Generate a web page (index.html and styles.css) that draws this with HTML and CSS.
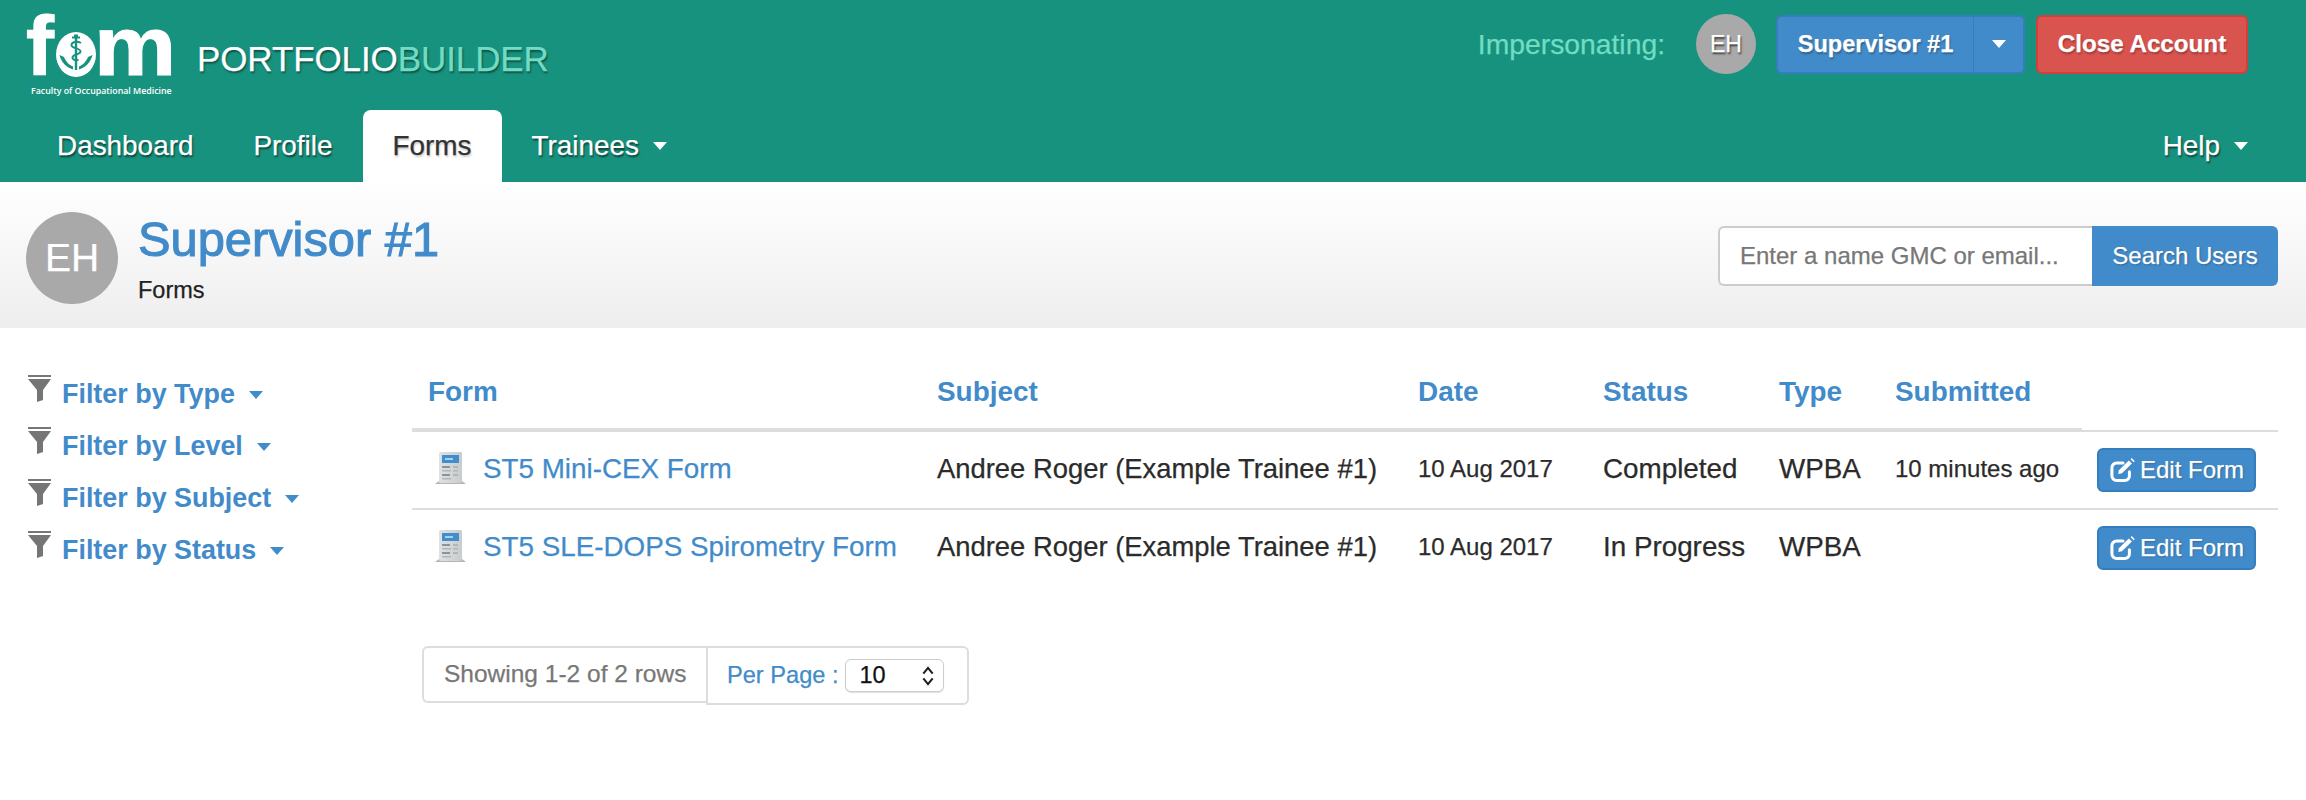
FILE: index.html
```html
<!DOCTYPE html>
<html lang="en">
<head>
<meta charset="utf-8">
<title>Portfolio Builder - Forms</title>
<link rel="stylesheet" href="styles.css">
</head>
<body>
<svg class="sprite" width="0" height="0" aria-hidden="true">
  <defs>
    <linearGradient id="docg" x1="0" y1="0" x2="1" y2="0"><stop offset="0" stop-color="#dfe1e2"/><stop offset="1" stop-color="#c9cccd"/></linearGradient>
    <symbol id="funnel" viewBox="0 0 23 27">
      <rect x="0" y="0" width="23" height="2" fill="#777"/>
      <path d="M0 4H23L15 15V25L9 27V15Z" fill="#757575"/>
    </symbol>
    <symbol id="doc" viewBox="0 0 31 32">
      <path d="M0 32L4 29H27L31 32Z" fill="#b5b5b5"/>
      <rect x="4" y="0" width="23" height="31" rx="1.5" fill="url(#docg)"/>
      <rect x="7" y="3" width="17" height="8" fill="#3f8fcf"/>
      <rect x="10" y="6" width="8" height="2" fill="#a7d2ee"/>
      <g fill="#8f9396">
        <rect x="7" y="14" width="8" height="2"/><rect x="18" y="14" width="5" height="2" fill="#b3b6b8"/>
        <rect x="7" y="18" width="9" height="1.5" fill="#b3b6b8"/><rect x="18" y="18" width="5" height="1.5" fill="#b3b6b8"/>
        <rect x="7" y="22" width="8" height="2"/><rect x="18" y="22" width="5" height="2" fill="#b3b6b8"/>
        <rect x="7" y="26" width="9" height="1.5" fill="#b3b6b8"/>
      </g>
    </symbol>
    <symbol id="edit" viewBox="0 0 24 24">
      <path d="M17.500 13.500V17a4 4 0 0 1-4 4H6.500a4 4 0 0 1-4-4V10a4 4 0 0 1 4-4H12" fill="none" stroke="#fff" stroke-width="2.600" stroke-linecap="round"/>
      <path d="M8.500 12.200L17 3.800l2.600 2.600L11.100 14.800 7.900 15.400Z" fill="#fff"/>
      <path d="M19.500 1.800l2.600 2.600-1 1L18.500 2.800Z" fill="#fff"/>
    </symbol>
  </defs>
</svg>

<header class="topbar">
  <div class="brand-row">
    <a class="logo" href="#">
      <span class="logo-mark">
        <span class="logo-letter logo-f">f</span>
        <svg class="logo-o" viewBox="0 0 40 45" aria-hidden="true">
          <ellipse cx="20" cy="22.500" rx="20" ry="22.500" fill="#fff"/>
          <path d="M3.500 23C5 30 10 35 17 37.500V34.500C13 33 9.500 29 8 25ZM36.500 23C35 30 30 35 23 37.500V34.500C27 33 30.500 29 32 25Z" fill="#17927e"/>
          <rect x="18.800" y="6" width="2.400" height="32" fill="#17927e"/>
          <path d="M16 5.500h8M18 3.500h4" stroke="#17927e" stroke-width="2"/>
          <path d="M25 11c-4-2.500-10-1-9.500 2.500.5 3 9 2.500 9 6s-8 2.500-8 6c0 2.500 4 3.500 6 2" fill="none" stroke="#17927e" stroke-width="1.900"/>
        </svg>
        <span class="logo-letter logo-m">m</span>
      </span>
      <span class="logo-tag">Faculty of Occupational Medicine</span>
    </a>
    <div class="product"><span class="product-a">PORTFOLIO</span><span class="product-b">BUILDER</span></div>
    <div class="session">
      <span class="imp-label">Impersonating:</span>
      <span class="avatar-sm">EH</span>
      <div class="split-btn">
        <button class="btn-main">Supervisor #1</button>
        <button class="btn-caret"><span class="caret caret-white"></span></button>
      </div>
      <button class="btn-close">Close Account</button>
    </div>
  </div>
  <nav class="tabs">
    <a class="tab" href="#">Dashboard</a>
    <a class="tab" href="#">Profile</a>
    <a class="tab tab-active" href="#">Forms</a>
    <a class="tab" href="#">Trainees<span class="caret caret-white"></span></a>
    <a class="tab tab-right" href="#">Help<span class="caret caret-white"></span></a>
  </nav>
</header>

<section class="subheader">
  <span class="avatar-lg">EH</span>
  <div class="who">
    <h1>Supervisor #1</h1>
    <p>Forms</p>
  </div>
  <form class="search">
    <input type="text" placeholder="Enter a name GMC or email...">
    <button type="button">Search Users</button>
  </form>
</section>

<main class="page">
  <aside class="filters">
    <a class="filter" href="#"><svg class="ic-funnel"><use href="#funnel"/></svg>Filter by Type<span class="caret caret-blue"></span></a>
    <a class="filter" href="#"><svg class="ic-funnel"><use href="#funnel"/></svg>Filter by Level<span class="caret caret-blue"></span></a>
    <a class="filter" href="#"><svg class="ic-funnel"><use href="#funnel"/></svg>Filter by Subject<span class="caret caret-blue"></span></a>
    <a class="filter" href="#"><svg class="ic-funnel"><use href="#funnel"/></svg>Filter by Status<span class="caret caret-blue"></span></a>
  </aside>
  <div class="content">
    <table class="forms">
      <colgroup>
        <col class="c-form"><col class="c-subject"><col class="c-date"><col class="c-status"><col class="c-type"><col class="c-sub"><col class="c-act">
      </colgroup>
      <thead>
        <tr><th>Form</th><th>Subject</th><th>Date</th><th>Status</th><th>Type</th><th>Submitted</th><th class="th-act"></th></tr>
      </thead>
      <tbody>
        <tr>
          <td><a class="form-link" href="#"><svg class="ic-doc"><use href="#doc"/></svg>ST5 Mini-CEX Form</a></td>
          <td class="subj">Andree Roger (Example Trainee #1)</td>
          <td class="small">10 Aug 2017</td>
          <td>Completed</td>
          <td>WPBA</td>
          <td class="small">10 minutes ago</td>
          <td class="act"><button class="btn-edit"><svg class="ic-edit"><use href="#edit"/></svg>Edit Form</button></td>
        </tr>
        <tr>
          <td><a class="form-link" href="#"><svg class="ic-doc"><use href="#doc"/></svg>ST5 SLE-DOPS Spirometry Form</a></td>
          <td class="subj">Andree Roger (Example Trainee #1)</td>
          <td class="small">10 Aug 2017</td>
          <td>In Progress</td>
          <td>WPBA</td>
          <td class="small"></td>
          <td class="act"><button class="btn-edit"><svg class="ic-edit"><use href="#edit"/></svg>Edit Form</button></td>
        </tr>
      </tbody>
    </table>
    <div class="pager">
      <span class="pager-info">Showing 1-2 of 2 rows</span>
      <div class="pager-size">
        <span class="pager-label">Per Page :</span>
        <span class="select">10
          <svg class="chev" viewBox="0 0 12 20" aria-hidden="true"><path d="M2 8L6 3l4 5M2 12l4 5 4-5" fill="none" stroke="#222" stroke-width="1.800"/></svg>
        </span>
      </div>
    </div>
  </div>
</main>
</body>
</html>
```

FILE: styles.css
```css
* { box-sizing: border-box; }
html, body { margin: 0; padding: 0; }
body {
  height: 800px;
  overflow: hidden;
  background: #fff;
  color: #2b2b2b;
  font-family: "Liberation Sans", Arial, sans-serif;
  font-size: 27.8px;
  -webkit-text-stroke: 0.25px;
}
a { text-decoration: none; }
button { font-family: inherit; cursor: pointer; }
.sprite { position: absolute; }

/* top bar */
.topbar { background: #17927e; height: 182px; display: flex; flex-direction: column; }
.brand-row { height: 110px; display: flex; align-items: flex-start; padding: 14px 58px 0 27px; }
.logo { width: 146px; height: 80px; display: flex; flex-direction: column; color: #fff; }
.logo-mark { display: flex; height: 70px; align-items: flex-end; }
.logo-letter { font-size: 84px; font-weight: 700; line-height: 80px; height: 78px; color: #fff; -webkit-text-stroke: 1px #fff; }
.logo-f { margin-left: -1px; }
.logo-m { transform: scaleX(1.1); transform-origin: left center; }
.logo-o { width: 40px; height: 45px; margin: 0 -2px 7px 2px; flex: none; }
.logo-tag { font: 600 8.800px/12px "Open Sans", "Liberation Sans", sans-serif; margin: 1px 0 0 4px; white-space: nowrap; -webkit-text-stroke: 0; }
.product { margin: 25px 0 0 24px; font-size: 35px; line-height: 40px; letter-spacing: -0.1px; text-shadow: 1px 2px 2px rgba(0,0,0,.45); }
.product-a { color: #fff; }
.product-b { color: #72dcc3; }
.session { margin-left: auto; display: flex; align-items: center; height: 60px; }
.imp-label { color: #72dcc3; font-size: 28.300px; margin-right: 31px; }
.avatar-sm {
  width: 60px; height: 60px; border-radius: 50%; background: #a9a9a9; color: #fff;
  display: flex; align-items: center; justify-content: center; font-size: 23px;
  text-shadow: 1px 2px 2px rgba(0,0,0,.7); margin-right: 20px;
}
.split-btn { display: flex; height: 59px; }
.btn-main, .btn-caret, .btn-close {
  height: 59px; color: #fff; font-size: 23.500px; font-weight: 700; text-shadow: 1px 2px 2px rgba(0,0,0,.3);
}
.btn-main {
  width: 198px; background: #428bca; border: 2px solid #357ebd; border-right: 1px solid #357ebd;
  border-radius: 6px 0 0 6px; padding: 0;
}
.btn-caret {
  width: 51px; background: #428bca; border: 2px solid #357ebd; border-left: 0;
  border-radius: 0 6px 6px 0; padding: 0; display: flex; align-items: center; justify-content: center;
}
.btn-caret .caret { margin: 0; }
.btn-close {
  width: 212px; margin-left: 11px; background: #d9534f; border: 2px solid #d43f3a; border-radius: 6px; padding: 0; font-size: 24.200px;
}
.caret { display: inline-block; width: 0; height: 0; border-left: 7px solid transparent; border-right: 7px solid transparent; margin-left: 14px; vertical-align: middle; -webkit-text-stroke: 0; }
.caret-white { border-top: 8px solid #fff; }
.caret-blue { border-top: 8px solid #428bca; }

.tabs { height: 72px; display: flex; padding: 0 58px 0 27px; }
.tab {
  height: 72px; display: flex; align-items: center; padding: 0 30px; color: #fff; font-size: 27.900px;
  text-shadow: 1px 2px 2px rgba(0,0,0,.6);
}
.tab-active { background: #fff; color: #333; border-radius: 8px 8px 0 0; text-shadow: 1px 2px 2px rgba(0,0,0,.2); }
.tab-right { margin-left: auto; padding: 0; }

/* sub header */
.subheader {
  height: 146px; display: flex; align-items: flex-start; padding: 30px 28px 0 26px;
  background: linear-gradient(#fff, #eee);
}
.avatar-lg {
  width: 92px; height: 92px; border-radius: 50%; background: #a9a9a9; color: #fff; flex: none;
  display: flex; align-items: center; justify-content: center; font-size: 39px;
}
.who { margin-left: 20px; }
.who h1 { margin: 0; font-size: 48.800px; line-height: 54px; font-weight: 400; color: #428bca; -webkit-text-stroke: 1.100px #428bca; }
.who p { margin: 10px 0 0; font-size: 23.500px; line-height: 28px; color: #222; }
.search { margin-left: auto; display: flex; margin-top: 14px; height: 60px; }
.search input {
  width: 374px; height: 60px; border: 2px solid #ccc; border-right: 0; border-radius: 6px 0 0 6px; padding: 0 20px;
  font: 24px "Liberation Sans", Arial, sans-serif; color: #333; background: #fff; outline: none;
}
.search input::placeholder { color: #777; opacity: 1; }
.search button {
  width: 186px; height: 60px; border: 0; background: #428bca; color: #fff; border-radius: 0 6px 6px 0;
  font-size: 24px; padding: 0; text-shadow: 1px 1px 2px rgba(0,0,0,.3);
}

/* page */
.page { display: flex; }
.filters { width: 412px; flex: none; padding: 53px 0 0 28px; display: flex; flex-direction: column; gap: 25px; }
.filter { display: flex; align-items: center; height: 27px; color: #428bca; font-size: 26.900px; font-weight: 700; line-height: 27px; white-space: nowrap; -webkit-text-stroke: 0; }
.filter .caret { margin-left: 14px; }
.ic-funnel { width: 23px; height: 27px; margin-right: 11px; flex: none; position: relative; top: -6px; }

.content { width: 1866px; padding-top: 28px; }
.forms { width: 1866px; table-layout: fixed; border-collapse: separate; border-spacing: 0; }
.c-form { width: 509px; } .c-subject { width: 481px; } .c-date { width: 185px; } .c-status { width: 176px; }
.c-type { width: 116px; } .c-sub { width: 203px; } .c-act { width: 196px; }
.forms th {
  height: 76px; padding: 0 16px; text-align: left; font-size: 27.900px; font-weight: 700; color: #428bca;
  border-bottom: 4px solid #ddd; vertical-align: middle; white-space: nowrap; -webkit-text-stroke: 0;
}
.forms th.th-act { border-bottom-width: 2px; }
.forms td { padding: 0 16px 3px; vertical-align: middle; height: 78px; border-bottom: 2px solid #ddd; white-space: nowrap; }
.forms td.act { padding-bottom: 0; padding-left: 15px; }
.forms tbody tr:last-child td { border-bottom: 0; height: 76px; }
.forms td.small { font-size: 24px; }
.forms td.subj { font-size: 27.400px; }
.form-link { display: flex; align-items: center; color: #428bca; margin-left: 7px; }
.ic-doc { width: 31px; height: 32px; margin-right: 17px; flex: none; position: relative; top: -1px; }
.btn-edit {
  display: flex; align-items: center; width: 159px; height: 44px; padding: 0 0 0 10px; background: #428bca;
  border: 2px solid #357ebd; border-radius: 6px; color: #fff; font-size: 24px; white-space: nowrap;
  text-shadow: 1px 1px 2px rgba(0,0,0,.25);
}
.ic-edit { width: 28px; height: 28px; margin-right: 3px; flex: none; }

.pager { display: flex; align-items: flex-start; margin: 60px 0 0 10px; }
.pager-info {
  width: 284px; height: 57px; display: flex; align-items: center; padding: 0 0 2px 20px; border: 2px solid #ddd; border-right: 0;
  border-radius: 6px 0 0 6px; color: #777; font-size: 24.500px; white-space: nowrap;
}
.pager-size {
  width: 263px; height: 59px; display: flex; align-items: center; border: 2px solid #ddd; border-radius: 0 6px 6px 0; padding-left: 19px;
}
.pager-label { color: #428bca; font-size: 23.600px; white-space: nowrap; }
.select {
  margin-left: 7px; width: 99px; height: 33px; border: 1px solid #ccc; border-radius: 6px; display: flex; align-items: center;
  justify-content: space-between; padding: 0 8px 0 13px; color: #111; font-size: 23.500px; box-shadow: 0 1px 1px rgba(0,0,0,.12); background: #fff;
}
.chev { width: 14px; height: 24px; }
```
